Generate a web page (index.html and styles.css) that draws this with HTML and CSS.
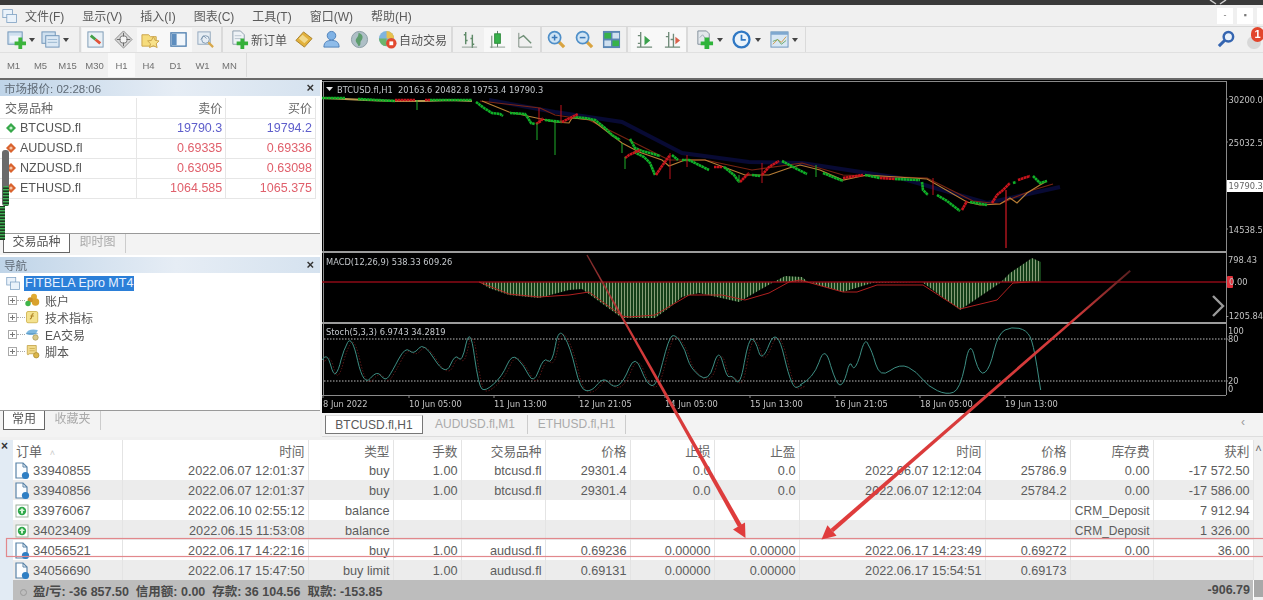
FILE: index.html
```html
<!DOCTYPE html>
<html lang="zh">
<head>
<meta charset="utf-8">
<title>MT4</title>
<link rel="stylesheet" href="styles.css">
</head>
<body>
<svg class="defs" aria-hidden="true">
  <symbol id="i-new" viewBox="0 0 20 20"><rect x="1" y="2" width="15" height="13" fill="#cfe0ef" stroke="#6f94b8"/><rect x="3" y="6" width="11" height="7" fill="#eef4fa"/><path d="M12 8h4v4h4v4h-4v4h-4v-4H8v-4h4z" fill="#3cb43c"/></symbol>
  <symbol id="i-prof" viewBox="0 0 20 20"><rect x="1" y="2" width="14" height="12" fill="#cfe0ef" stroke="#6f94b8"/><rect x="5" y="6" width="14" height="12" fill="#dbe8f4" stroke="#6f94b8"/><path d="M7 10h10M7 13h10" stroke="#9ab6d0"/></symbol>
  <symbol id="i-colors" viewBox="0 0 20 20"><rect x="2" y="2" width="16" height="16" fill="#e8f0f6" stroke="#7d9ab5"/><path d="M5 6l5 4" stroke="#43a047" stroke-width="3"/><path d="M10 10l5 4" stroke="#e0533a" stroke-width="3"/></symbol>
  <symbol id="i-cross" viewBox="0 0 20 20"><path d="M10 1l9 9-9 9-9-9z" fill="#d8d8d8" stroke="#8a8a8a"/><circle cx="10" cy="10" r="4" fill="#f4f4f4" stroke="#777"/><path d="M10 3v4M10 13v4M3 10h4M13 10h4" stroke="#666"/></symbol>
  <symbol id="i-star" viewBox="0 0 20 20"><path d="M1 5h7l2 2h6v10H1z" fill="#f6dc7c" stroke="#c9a24a"/><path d="M13 7l2 4 4 .5-3 3 1 4-4-2-4 2 1-4-3-3 4-.5z" fill="#f8e28a" stroke="#c9a24a"/></symbol>
  <symbol id="i-panel" viewBox="0 0 20 20"><rect x="2" y="3" width="16" height="14" fill="#f1f6fb" stroke="#4f7fb0" stroke-width="1.4"/><rect x="3" y="4" width="5" height="12" fill="#5d8dbe"/></symbol>
  <symbol id="i-docz" viewBox="0 0 20 20"><rect x="2" y="2" width="13" height="13" fill="#e6edf4" stroke="#93a8bd"/><path d="M5 10l3-4 3 3" stroke="#7d97b0" fill="none"/><circle cx="10" cy="10" r="4" fill="none" stroke="#7d97b0"/><path d="M13 13l5 5" stroke="#d8a84a" stroke-width="2.4"/></symbol>
  <symbol id="i-order" viewBox="0 0 20 20"><path d="M3 1h8l4 4v10H3z" fill="#eef2f6" stroke="#8b9cab"/><path d="M5 6h7M5 9h7" stroke="#b8c4cf"/><path d="M11 9h4v3h4v4h-4v4h-4v-4H7v-4h4z" fill="#36b03a"/></symbol>
  <symbol id="i-diam" viewBox="0 0 20 20"><path d="M10 2l9 7-8 9-9-7z" fill="#e2b13c" stroke="#a9812a"/><path d="M9 5l6 5-4 4-6-5z" fill="#f1d98d"/></symbol>
  <symbol id="i-ppl" viewBox="0 0 20 20"><circle cx="10" cy="6" r="4.5" fill="#7fb2e5" stroke="#4d7fb8"/><path d="M2 18c0-6 4-7 8-7s8 1 8 7z" fill="#8fbce9" stroke="#4d7fb8"/></symbol>
  <symbol id="i-globe" viewBox="0 0 20 20"><circle cx="10" cy="10" r="8.5" fill="#aebfc6" stroke="#8a9ca3"/><path d="M9 3c3 1 5 3 4 6s-2 2-2 5-2 3-2 3c-1-3-3-4-3-6s3-3 3-8z" fill="#5c9c6c"/></symbol>
  <symbol id="i-auto" viewBox="0 0 20 20"><circle cx="9" cy="9" r="8" fill="#7fb4de"/><path d="M9 1a8 8 0 0 1 8 8H9z" fill="#e8c04c"/><path d="M1 9a8 8 0 0 0 8 8V9z" fill="#6cb56c"/><circle cx="14" cy="14" r="5.5" fill="#e2492f"/><rect x="12" y="12" width="4" height="4" fill="#fff"/></symbol>
  <symbol id="i-bar" viewBox="0 0 20 20"><path d="M6 2v13M4 5h2M6 11h2M13 5v14M11 9h2M13 15h2" stroke="#5f8a68" stroke-width="1.5" fill="none"/><path d="M2 18h16" stroke="#8a9a90"/></symbol>
  <symbol id="i-candle" viewBox="0 0 20 20"><path d="M10 1v17M4 6v13" stroke="#5c7a63"/><rect x="7" y="4" width="6" height="10" fill="#37b14a" stroke="#2d8a3b"/><path d="M2 18h16" stroke="#8a9a90"/></symbol>
  <symbol id="i-line" viewBox="0 0 20 20"><path d="M4 3v15h14" stroke="#7c8a80" fill="none"/><path d="M4 9l5-3 8 8" stroke="#6f8f76" stroke-width="1.4" fill="none"/></symbol>
  <symbol id="i-zin" viewBox="0 0 20 20"><path d="M12 12l6 6" stroke="#d9a441" stroke-width="3.4"/><circle cx="8" cy="8" r="6.4" fill="#cfe4f5" stroke="#4f8fc8" stroke-width="1.8"/><path d="M5 8h6M8 5v6" stroke="#3a78b8" stroke-width="1.6"/></symbol>
  <symbol id="i-zout" viewBox="0 0 20 20"><path d="M12 12l6 6" stroke="#d9a441" stroke-width="3.4"/><circle cx="8" cy="8" r="6.4" fill="#cfe4f5" stroke="#4f8fc8" stroke-width="1.8"/><path d="M5 8h6" stroke="#3a78b8" stroke-width="1.6"/></symbol>
  <symbol id="i-tile" viewBox="0 0 20 20"><rect x="1" y="1" width="18" height="18" fill="#5a86b4"/><rect x="2.5" y="3" width="7" height="6" fill="#37b24a"/><rect x="11" y="3" width="7" height="6" fill="#cfe0ef"/><rect x="2.5" y="11" width="7" height="6" fill="#cfe0ef"/><rect x="11" y="11" width="7" height="6" fill="#37b24a"/></symbol>
  <symbol id="i-shift" viewBox="0 0 20 20"><path d="M6 2v16M3 6h3M3 14h3M2 18h16" stroke="#6f8a78" stroke-width="1.4" fill="none"/><path d="M10 6l6 5-6 5z" fill="#3aa14c"/></symbol>
  <symbol id="i-scroll" viewBox="0 0 20 20"><path d="M6 2v16M11 4v14M3 7h3M8 10h3M2 18h16" stroke="#6f8a78" stroke-width="1.4" fill="none"/><path d="M13 7l5 4-5 4z" fill="#d9604a"/></symbol>
  <symbol id="i-ind" viewBox="0 0 20 20"><path d="M3 1h9l3 3v11H3z" fill="#e3e8ec" stroke="#7f8e9a"/><path d="M5 8l3-3 3 4" stroke="#9aa8b2" fill="none"/><path d="M10 8h5v4h4v4h-4v4h-5v-4H6v-4h4z" fill="#2fb43a"/></symbol>
  <symbol id="i-clock" viewBox="0 0 20 20"><circle cx="10" cy="10" r="8.4" fill="#eaf3fb" stroke="#2f78c4" stroke-width="2.4"/><path d="M10 5v5.5h4.5" stroke="#2f78c4" stroke-width="1.8" fill="none"/></symbol>
  <symbol id="i-tpl" viewBox="0 0 20 20"><rect x="1" y="2" width="18" height="16" fill="#d8e7f4" stroke="#6a93ba"/><rect x="1" y="2" width="18" height="3" fill="#7fa8cf"/><path d="M3 15l5-5 4 3 5-6" stroke="#d49b47" fill="none"/><path d="M3 12l5-2 4 5 5-4" stroke="#69a968" fill="none"/></symbol>
  <symbol id="i-search" viewBox="0 0 20 20"><circle cx="12" cy="7" r="5" fill="#eaf2fb" stroke="#3565b0" stroke-width="2.6"/><path d="M8 11l-6 6" stroke="#3565b0" stroke-width="3.2"/></symbol>
  <symbol id="i-plus" viewBox="0 0 9 9"><rect x=".5" y=".5" width="8" height="8" fill="#fff" stroke="#a9a9a9"/><path d="M2 4.5h5M4.5 2v5" stroke="#777"/></symbol>
  <symbol id="i-root" viewBox="0 0 20 20"><rect x="1" y="2" width="12" height="10" fill="#eaf2fa" stroke="#7da0c2"/><rect x="6" y="8" width="12" height="10" fill="#eaf2fa" stroke="#7da0c2"/></symbol>
  <symbol id="i-acct" viewBox="0 0 20 20"><circle cx="12" cy="5" r="4" fill="#e0ab32"/><circle cx="14" cy="12" r="5" fill="#d9a22c"/><circle cx="7" cy="9" r="3.5" fill="#c88f2a"/><circle cx="4" cy="14" r="3.6" fill="#3fb54a"/></symbol>
  <symbol id="i-func" viewBox="0 0 20 20"><rect x="2" y="2" width="15" height="15" rx="2" fill="#f4e28f" stroke="#c9a93d"/><path d="M11.5 5c-2-.5-2 1-2.4 3s-.6 4-2.6 4" stroke="#a87a1c" stroke-width="1.4" fill="none"/><path d="M7 8h5" stroke="#a87a1c"/></symbol>
  <symbol id="i-ea" viewBox="0 0 20 20"><path d="M1 9c2-5 8-7 16-5-1 6-8 9-16 5z" fill="#7db8e0"/><path d="M2 9h15" stroke="#4f8db8"/><circle cx="14" cy="14" r="3.6" fill="#d8c98a" stroke="#a79a55"/></symbol>
  <symbol id="i-script" viewBox="0 0 20 20"><path d="M3 2h12v11H5c0 2-2 2-2 0z" fill="#f0d98a" stroke="#bd9c3d"/><path d="M6 6h7M6 9h7" stroke="#c9a94a"/><circle cx="15" cy="15" r="3.6" fill="#dcb64a" stroke="#a88a2c"/></symbol>
  <symbol id="i-doc" viewBox="0 0 16 18"><path d="M2 1h7l4 4v11H2z" fill="#fbfdff" stroke="#5a84a8" stroke-width="1.2"/><path d="M9 1v4h4" fill="none" stroke="#5a84a8"/><circle cx="11.5" cy="13.5" r="3.6" fill="#2f7fc4"/></symbol>
  <symbol id="i-bal" viewBox="0 0 16 18"><rect x="2" y="3" width="12" height="12" fill="#fff" stroke="#9fb39f"/><circle cx="8" cy="9" r="4.2" fill="#2fa84a"/><path d="M8 6l3 3H9v2.5H7V9H5z" fill="#d8f5d8"/></symbol>
  <symbol id="i-up" viewBox="0 0 12 12"><path d="M6 1l5 5-5 5-5-5z" fill="#37a84a"/><circle cx="6" cy="6" r="1.6" fill="#c9f0cf"/></symbol>
  <symbol id="i-dn" viewBox="0 0 12 12"><path d="M6 1l5 5-5 5-5-5z" fill="#d9632f"/><circle cx="6" cy="6" r="1.6" fill="#f5c6a8"/></symbol>
</svg>

<div class="page">
  <div class="titlestrip"></div>

  <div class="menubar">
    <svg class="appicon"><use href="#i-root"/></svg>
    <span class="menu">文件(F)</span><span class="menu">显示(V)</span><span class="menu">插入(I)</span><span class="menu">图表(C)</span><span class="menu">工具(T)</span><span class="menu">窗口(W)</span><span class="menu">帮助(H)</span>
    <div class="winbtns"><span class="winbtn">-</span><span class="winbtn">▪</span><span class="winbtn cut"></span></div>
  </div>

  <div class="toolbar">
    <div class="tbgroup g-a">
      <span class="tb w26"><svg class="ic"><use href="#i-new"/></svg></span><span class="caret"></span>
      <span class="tb w26 m2"><svg class="ic"><use href="#i-prof"/></svg></span><span class="caret"></span>
    </div>
    <div class="tbgroup g-b">
      <span class="tb on"><svg class="ic"><use href="#i-colors"/></svg></span>
      <span class="tb"><svg class="ic"><use href="#i-cross"/></svg></span>
      <span class="tb on"><svg class="ic"><use href="#i-star"/></svg></span>
      <span class="tb on"><svg class="ic"><use href="#i-panel"/></svg></span>
      <span class="tb"><svg class="ic"><use href="#i-docz"/></svg></span>
    </div>
    <div class="tbgroup g-c">
      <span class="tb w26"><svg class="ic"><use href="#i-order"/></svg></span><span class="tbtext">新订单</span>
      <span class="tb w28 m1"><svg class="ic"><use href="#i-diam"/></svg></span>
      <span class="tb w28"><svg class="ic"><use href="#i-ppl"/></svg></span>
      <span class="tb w30"><svg class="ic"><use href="#i-globe"/></svg></span>
      <span class="tb w26"><svg class="ic"><use href="#i-auto"/></svg></span><span class="tbtext">自动交易</span>
    </div>
    <div class="tbgroup g-d">
      <span class="tb"><svg class="ic"><use href="#i-bar"/></svg></span>
      <span class="tb on"><svg class="ic"><use href="#i-candle"/></svg></span>
      <span class="tb"><svg class="ic"><use href="#i-line"/></svg></span>
    </div>
    <div class="tbgroup g-e">
      <span class="tb"><svg class="ic"><use href="#i-zin"/></svg></span>
      <span class="tb"><svg class="ic"><use href="#i-zout"/></svg></span>
      <span class="tb"><svg class="ic"><use href="#i-tile"/></svg></span>
    </div>
    <div class="tbgroup g-f">
      <span class="tb on"><svg class="ic"><use href="#i-shift"/></svg></span>
      <span class="tb on"><svg class="ic"><use href="#i-scroll"/></svg></span>
    </div>
    <div class="tbgroup g-g">
      <span class="tb w26"><svg class="ic"><use href="#i-ind"/></svg></span><span class="caret"></span>
      <span class="tb w26 m5"><svg class="ic"><use href="#i-clock"/></svg></span><span class="caret"></span>
      <span class="tb w26 m5"><svg class="ic"><use href="#i-tpl"/></svg></span><span class="caret"></span>
    </div>
    <div class="tbright">
      <svg class="ic"><use href="#i-search"/></svg>
      <span class="bubble"><span class="badge">1</span></span>
    </div>
  </div>

  <div class="tfbar">
    <span class="tf">M1</span><span class="tf">M5</span><span class="tf">M15</span><span class="tf">M30</span><span class="tf on">H1</span><span class="tf">H4</span><span class="tf">D1</span><span class="tf">W1</span><span class="tf">MN</span><span class="tfend"></span>
  </div>

  <div class="main">
    <div class="left">
      <section class="panel market">
        <header class="ptitle"><span>市场报价: 02:28:06</span><b class="pclose">×</b></header>
        <table class="mw">
          <tr class="mwh"><td>交易品种</td><td class="r">卖价</td><td class="r">买价</td></tr>
          <tr><td><svg class="dir"><use href="#i-up"/></svg>BTCUSD.fl</td><td class="r blue">19790.3</td><td class="r blue">19794.2</td></tr>
          <tr><td><svg class="dir"><use href="#i-dn"/></svg>AUDUSD.fl</td><td class="r red">0.69335</td><td class="r red">0.69336</td></tr>
          <tr><td><svg class="dir"><use href="#i-dn"/></svg>NZDUSD.fl</td><td class="r red">0.63095</td><td class="r red">0.63098</td></tr>
          <tr><td><svg class="dir"><use href="#i-dn"/></svg>ETHUSD.fl</td><td class="r red">1064.585</td><td class="r red">1065.375</td></tr>
        </table>
        <div class="grow"></div>
        <div class="ptabs"><span class="ptab on">交易品种</span><span class="ptab">即时图</span></div>
      </section>
      <section class="panel nav">
        <header class="ptitle"><span>导航</span><b class="pclose">×</b></header>
        <div class="tree">
          <div class="troot"><svg class="ti"><use href="#i-root"/></svg><span class="sel">FITBELA Epro MT4</span></div>
          <div class="tnode"><svg class="tplus"><use href="#i-plus"/></svg><i class="tdash"></i><svg class="ti"><use href="#i-acct"/></svg>账户</div>
          <div class="tnode"><svg class="tplus"><use href="#i-plus"/></svg><i class="tdash"></i><svg class="ti"><use href="#i-func"/></svg>技术指标</div>
          <div class="tnode"><svg class="tplus"><use href="#i-plus"/></svg><i class="tdash"></i><svg class="ti"><use href="#i-ea"/></svg>EA交易</div>
          <div class="tnode"><svg class="tplus"><use href="#i-plus"/></svg><i class="tdash"></i><svg class="ti"><use href="#i-script"/></svg>脚本</div>
        </div>
        <div class="grow"></div>
        <div class="ptabs short"><span class="ptab on">常用</span><span class="ptab">收藏夹</span></div>
      </section>
    </div>

    <div class="chartcol">
      <svg class="chart" viewBox="322 80 941 333" xmlns="http://www.w3.org/2000/svg">
        <defs>
          <pattern id="hist" width="3" height="8" patternUnits="userSpaceOnUse">
            <rect width="3" height="8" fill="#143f18"/><rect width="1" height="8" fill="#869e78"/>
          </pattern>
        </defs>
        <g class="frame">
          <path d="M322 81.5H1226M323.5 81V395M1226.5 81V395"/>
          <path class="thick" d="M322 252H1226M322 323H1226"/>
          <path d="M322 395.5H1226"/>
          <path d="M1226 99h2M1226 142h2M1226 229h2M1226 339h2M1226 381h2"/>
          <path d="M323 396v2M409 396v2M494 396v2M579 396v2M665 396v2M750 396v2M835 396v2M920 396v2M1005 396v2"/>
        </g>
        <text class="ct" x="337" y="93">BTCUSD.fl,H1  20163.6 20482.8 19753.4 19790.3</text>
        <path d="M326 87h7l-3.500 4z" fill="#e8e8e8"/>

        <!-- moving averages -->
        <g fill="none">
          <polyline stroke="#080a34" stroke-width="4" points="489,100 555,112 622,122 682,153 749,162 802,163 900,178 987,203 1060,187"/>
          <polyline stroke="#7a2412" stroke-width="1.200" points="480,101 540,108 555,115 589,120 635,143 669,160 705,160 752,170 802,163 843,175 927,178 973,201 1000,204 1013,198 1033,190 1053,184"/>
          <polyline stroke="#b87e36" stroke-width="1.200" points="482,101 509,112 555,122 569,123 572,118 592,120 622,143 639,152 662,160 669,166 685,160 705,160 745,175 769,175 789,168 800,165 820,170 843,180 867,175 927,179 967,202 980,205 1000,204 1010,198 1017,203 1027,193 1040,185 1047,181"/>
        </g>
        <!-- flat opening of the price -->
        <polyline fill="none" stroke="#b89a50" stroke-width="2" points="322,98 345,99 365,100 395,101 425,101 450,100 472,101"/>
        <g class="gc">
          <polyline points="322,98 345,98"/><polyline points="358,99 395,101"/><polyline points="430,100 472,100"/>
          <polyline points="476,102 484,108 492,113 500,114 503,116"/>
          <polyline points="510,113 525,114 528,118 531,123 535,124"/>
          <polyline points="545,120 562,122"/>
          <polyline points="573,117 585,118 595,120 605,128 612,135 620,140"/>
          <polyline points="630,139 635,148 642,151 650,153 660,156"/>
          <polyline points="634,152 644,157 650,163 655,175"/>
          <polyline points="672,155 678,160"/>
          <polyline points="682,160 689,160 699,165 709,170"/>
          <polyline points="724,167 734,175 739,182"/>
          <polyline points="752,175 760,176"/>
          <polyline points="782,161 795,168 807,174"/>
          <polyline points="823,173 833,177 843,181"/>
          <polyline points="865,175 880,178"/><polyline points="895,179 920,180"/>
          <polyline points="922,182 923,190 928,195"/>
          <polyline points="937,195 947,201 960,211"/>
          <polyline points="970,202 987,205"/>
          <polyline points="1013,183 1016,182"/>
          <polyline points="1033,176 1040,183 1047,181"/>
        </g>
        <g class="rc">
          <polyline points="395,100 415,100"/><polyline points="425,100 430,100"/>
          <polyline points="536,124 541,121 543,118"/>
          <polyline points="562,122 570,118 578,114"/>
          <polyline points="625,158 629,155 640,150"/>
          <polyline points="656,175 662,166 670,155"/>
          <polyline points="714,167 722,167"/>
          <polyline points="740,182 749,173"/>
          <polyline points="762,175 769,167 779,161"/>
          <polyline points="843,178 863,175"/>
          <polyline points="880,178 895,179"/>
          <polyline points="962,210 967,201"/>
          <polyline points="992,203 997,195 1003,190 1010,183"/>
          <polyline points="1018,180 1030,176"/>
        </g>
        <path stroke="#1fae2a" stroke-width="1" fill="none" d="M417 100v10M537 123v17M555 120v35M625 157v12M622 143v10M816 165v12M739 175v8"/>
        <path stroke="#c0121c" stroke-width="1" fill="none" d="M561 105v18M539 108v15M670 153v26M687 155v12M762 163v20M933 178v17"/>
        <path stroke="#a8141c" stroke-width="1.500" fill="none" d="M1006 190v58"/>

        <!-- MACD -->
        <polygon fill="url(#hist)" points="479,282 489,288 509,295 539,298 569,290 582,289 622,318 655,318 669,308 682,297 699,293 739,302 772,283 785,276 802,277 808,282 843,292 872,283 922,282 960,310 1000,283 1010,273 1032,258 1041,262 1041,282 1000,282 800,282"/>
        <path stroke="#8c0a16" stroke-width="1.500" fill="none" d="M322 282H1226"/>
        <polyline fill="none" stroke="#b02020" stroke-width="1" points="479,282 509,294 539,297 569,295 589,292 622,316 629,317 655,315 689,295 722,295 745,300 769,293 789,282 800,280 843,292 857,292 877,285 923,285 960,309 997,300 1013,283 1030,282"/>
        <text class="ct" x="326" y="265">MACD(12,26,9) 538.33 609.26</text>

        <!-- Stochastic -->
        <path class="lvl" d="M324 339H1226M324 381H1226"/>
        <g transform="translate(322 250) scale(.33333)" fill="none">
          <path class="sig" transform="translate(8 4)" d="M0,330 Q15,305 25,342 Q35,380 42,370 Q50,360 57,330 Q65,300 77,277 Q90,255 107,332 Q125,410 145,385 Q165,360 177,377 Q190,395 200,380 Q210,365 230,327 Q250,290 262,302 Q275,315 290,295 Q305,275 337,327 Q370,380 385,345 Q400,310 410,325 Q420,340 432,282 Q445,225 457,317 Q470,410 480,417 Q490,425 515,402 Q540,380 555,345 Q570,310 587,327 Q605,345 620,375 Q635,405 650,362 Q665,320 677,332 Q690,345 700,287 Q710,230 727,260 Q745,290 760,355 Q775,420 792,422 Q810,425 827,402 Q845,380 860,397 Q875,415 890,405 Q905,395 922,353 Q940,312 957,358 Q975,405 990,407 Q1005,410 1022,337 Q1040,265 1050,258 Q1060,252 1075,276 Q1090,300 1097,327 Q1105,355 1132,377 Q1160,400 1175,345 Q1190,290 1202,337 Q1215,385 1222,380 Q1230,375 1242,392 Q1255,410 1267,337 Q1280,265 1290,267 Q1300,270 1310,305 Q1320,340 1342,282 Q1365,225 1387,322 Q1410,420 1425,412 Q1440,405 1440,405"/>
          <path class="sto" d="M0,330 Q15,305 25,342 Q35,380 42,370 Q50,360 57,330 Q65,300 77,277 Q90,255 107,332 Q125,410 145,385 Q165,360 177,377 Q190,395 200,380 Q210,365 230,327 Q250,290 262,302 Q275,315 290,295 Q305,275 337,327 Q370,380 385,345 Q400,310 410,325 Q420,340 432,282 Q445,225 457,317 Q470,410 480,417 Q490,425 515,402 Q540,380 555,345 Q570,310 587,327 Q605,345 620,375 Q635,405 650,362 Q665,320 677,332 Q690,345 700,287 Q710,230 727,260 Q745,290 760,355 Q775,420 792,422 Q810,425 827,402 Q845,380 860,397 Q875,415 890,405 Q905,395 922,353 Q940,312 957,358 Q975,405 990,407 Q1005,410 1022,337 Q1040,265 1050,258 Q1060,252 1075,276 Q1090,300 1097,327 Q1105,355 1132,377 Q1160,400 1175,345 Q1190,290 1202,337 Q1215,385 1222,380 Q1230,375 1242,392 Q1255,410 1267,337 Q1280,265 1290,267 Q1300,270 1310,305 Q1320,340 1342,282 Q1365,225 1387,322 Q1410,420 1425,412 Q1440,405 1440,405"/>
        </g>
        <g transform="translate(800 250) scale(.33333)" fill="none">
          <path class="sto" d="M0,405 Q40,385 57,337 Q75,280 92,347 Q110,405 120,405 Q130,405 140,370 Q150,325 157,350 Q165,365 180,317 Q195,255 205,285 Q215,300 227,342 Q240,385 270,362 Q300,340 325,352 Q350,365 367,387 Q385,410 412,422 Q440,435 460,427 Q480,420 495,347 Q510,255 525,327 Q540,380 555,367 Q570,355 582,302 Q595,250 615,240 Q635,230 657,235 Q680,240 690,260 Q700,280 711,350 L722,420"/>
        </g>
        <text class="ct" x="326" y="335">Stoch(5,3,3) 6.9743 34.2819</text>

        <!-- axis -->
        <g class="ax">
          <text x="1228.600" y="102.500">30200.0</text><text x="1228.600" y="145.500">25032.5</text>
          <text x="1228.600" y="232.500">14538.5</text>
          <text x="1228" y="263">798.43</text>
          <text x="1225.800" y="319">-1205.84</text>
          <text x="1228" y="334">100</text><text x="1228" y="342">80</text><text x="1228" y="384">20</text><text x="1228" y="392">0</text>
        </g>
        <rect x="1227" y="180" width="36" height="12" fill="#fff"/>
        <text class="ax dark" x="1228.600" y="189">19790.3</text>
        <rect x="1227" y="276" width="6" height="12" rx="1" fill="#e0303a"/>
        <text class="ax" x="1229" y="285">0.00</text>
        <path d="M1213 296l10 10-10 10" fill="none" stroke="#9a9a9a" stroke-width="2.400"/>

        <g class="tl">
          <text x="323" y="407">8 Jun 2022</text><text x="409" y="407">10 Jun 05:00</text><text x="494" y="407">11 Jun 13:00</text><text x="579" y="407">12 Jun 21:05</text><text x="665" y="407">14 Jun 05:00</text><text x="750" y="407">15 Jun 13:00</text><text x="835" y="407">16 Jun 21:05</text><text x="920" y="407">18 Jun 05:00</text><text x="1005" y="407">19 Jun 13:00</text>
        </g>
      </svg>
      <div class="ctabs">
        <span class="ctab on">BTCUSD.fl,H1</span><span class="ctab">AUDUSD.fl,M1</span><span class="ctab third">ETHUSD.fl,H1</span>
        <span class="cnav">‹</span>
      </div>
    </div>
  </div>

  <div class="terminal">
    <div class="rail"><b>×</b></div>
    <table class="orders">
      <colgroup><col class="c1"><col class="c2"><col class="c3"><col class="c4"><col class="c5"><col class="c6"><col class="c7"><col class="c8"><col class="c9"><col class="c10"><col class="c11"><col class="c12"></colgroup>
      <tr class="oh"><td class="l">订单 <span class="sort">˄</span></td><td>时间</td><td>类型</td><td>手数</td><td>交易品种</td><td>价格</td><td>止损</td><td>止盈</td><td>时间</td><td>价格</td><td>库存费</td><td>获利</td></tr>
      <tr><td class="l"><svg class="ri"><use href="#i-doc"/></svg>33940855</td><td>2022.06.07 12:01:37</td><td>buy</td><td>1.00</td><td>btcusd.fl</td><td>29301.4</td><td>0.0</td><td>0.0</td><td>2022.06.07 12:12:04</td><td>25786.9</td><td>0.00</td><td>-17 572.50</td></tr>
      <tr><td class="l"><svg class="ri"><use href="#i-doc"/></svg>33940856</td><td>2022.06.07 12:01:37</td><td>buy</td><td>1.00</td><td>btcusd.fl</td><td>29301.4</td><td>0.0</td><td>0.0</td><td>2022.06.07 12:12:04</td><td>25784.2</td><td>0.00</td><td>-17 586.00</td></tr>
      <tr><td class="l"><svg class="ri"><use href="#i-bal"/></svg>33976067</td><td>2022.06.10 02:55:12</td><td>balance</td><td></td><td></td><td></td><td></td><td></td><td></td><td></td><td class="crm">CRM_Deposit</td><td>7 912.94</td></tr>
      <tr><td class="l"><svg class="ri"><use href="#i-bal"/></svg>34023409</td><td>2022.06.15 11:53:08</td><td>balance</td><td></td><td></td><td></td><td></td><td></td><td></td><td></td><td class="crm">CRM_Deposit</td><td>1 326.00</td></tr>
      <tr><td class="l"><svg class="ri"><use href="#i-doc"/></svg>34056521</td><td>2022.06.17 14:22:16</td><td>buy</td><td>1.00</td><td>audusd.fl</td><td>0.69236</td><td>0.00000</td><td>0.00000</td><td>2022.06.17 14:23:49</td><td>0.69272</td><td>0.00</td><td>36.00</td></tr>
      <tr><td class="l"><svg class="ri"><use href="#i-doc"/></svg>34056690</td><td>2022.06.17 15:47:50</td><td>buy limit</td><td>1.00</td><td>audusd.fl</td><td>0.69131</td><td>0.00000</td><td>0.00000</td><td>2022.06.17 15:54:51</td><td>0.69173</td><td></td><td></td></tr>
      <tr class="tot"><td class="l" colspan="11"><i class="dot"></i>盈/亏: -36 857.50&nbsp; 信用额: 0.00&nbsp; 存款: 36 104.56&nbsp; 取款: -153.85</td><td>-906.79</td></tr>
    </table>
    <div class="vscroll"><span class="sup">˄</span><span class="thumb"></span></div>
  </div>

  <svg class="overlay" viewBox="0 0 1263 600" xmlns="http://www.w3.org/2000/svg">
    <defs>
      <linearGradient id="a1" gradientUnits="userSpaceOnUse" x1="587" y1="255" x2="745" y2="537"><stop offset="0" stop-color="#7a2a2a"/><stop offset=".3" stop-color="#d23a3a"/><stop offset="1" stop-color="#e03c3c"/></linearGradient>
      <linearGradient id="a2" gradientUnits="userSpaceOnUse" x1="1130" y1="271" x2="822" y2="539"><stop offset="0" stop-color="#5a2020"/><stop offset=".18" stop-color="#d23a3a"/><stop offset="1" stop-color="#e03c3c"/></linearGradient>
      <pattern id="stripes" width="7" height="3" patternUnits="userSpaceOnUse"><rect width="7" height="3" fill="#1e3a20"/><rect width="7" height="1.400" fill="#3fae55"/></pattern>
    </defs>
    <path d="M1210 0l6 4M1226 0l-6 4" stroke="#cfcfcf" stroke-width="1.500" fill="none"/>
    <rect x="2" y="150" width="7" height="56" rx="3" fill="#6a6a6a"/>
    <rect x="3" y="186" width="6" height="20" rx="2" fill="url(#stripes)"/>
    <rect x="0" y="206" width="5" height="34" fill="url(#stripes)"/>
    <rect class="hl" x="6.500" y="538.500" width="1260" height="18"/>
    <polygon fill="url(#a1)" points="586.400,255.300 587.600,254.700 742,525 738,527"/>
    <polygon fill="#e03c3c" points="745.500,538 733,529.400 745,522.600"/>
    <polygon fill="url(#a2)" points="1129.600,270 1130.800,271.500 833.500,532 830.500,529"/>
    <polygon fill="#e03c3c" points="821.500,539.500 827.400,525.200 836.600,535.800"/>
  </svg>
</div>
</body>
</html>
```
FILE: styles.css
```css
* { box-sizing: border-box; }
html, body { margin: 0; padding: 0; height: 600px; overflow: hidden; background: #f0f0f0; }
body { font-family: "Liberation Sans", "Noto Sans CJK SC", sans-serif; color: #555; }
.defs { position: absolute; width: 0; height: 0; }
.page { position: relative; width: 1263px; height: 600px; overflow: hidden; display: flex; flex-direction: column; filter: blur(.45px); }

.titlestrip { height: 5px; background: #3a3a3a; flex: none; }

.menubar { height: 22px; flex: none; display: flex; align-items: center; background: #f0f0f0; border-bottom: 1px solid #d8d8d8; font-size: 12px; color: #5a5a5a; }
.appicon { width: 16px; height: 16px; margin: 0 6px 0 2px; }
.menu { margin-left: 1px; margin-right: 17px; white-space: nowrap; }
.winbtns { margin-left: auto; display: flex; gap: 4px; }
.winbtn { width: 16px; height: 16px; background: #fff; font-size: 9px; line-height: 15px; text-align: center; color: #777; }
.winbtn.cut { width: 6px; }

.toolbar { height: 26px; flex: none; display: flex; align-items: center; background: #f0f0f0; border-bottom: 1px solid #e0e0e0; position: relative; }
.tbgroup { display: flex; align-items: center; height: 25px; border-right: 2px solid #dadada; flex: none; }
.g-a { width: 81px; padding-left: 3px; }
.g-b { width: 142px; padding-left: 1px; }
.g-c { width: 230px; padding-left: 3px; }
.g-d { width: 89px; padding-left: 3px; }
.g-e { width: 86px; padding-left: 1px; }
.g-f { width: 60px; padding-left: 3px; }
.g-g { width: 118px; padding-left: 3px; border-right: 1px solid #dadada; }
.tb { width: 27.500px; height: 24px; display: flex; align-items: center; justify-content: center; flex: none; }
.tb.on { background: #f8f8f8; }
.w26 { width: 26px; }
.w28 { width: 28px; }
.w30 { width: 29px; }
.m1 { margin-left: 1px; }
.m2 { margin-left: 2px; }
.m5 { margin-left: 5.500px; }
.ic { width: 19px; height: 19px; display: block; }
.caret { width: 0; height: 0; border-left: 3px solid transparent; border-right: 3px solid transparent; border-top: 4px solid #444; flex: none; }
.tbtext { font-size: 12px; color: #555; white-space: nowrap; margin-left: -1px; margin-right: 1px; }
.tbright { margin-left: auto; display: flex; align-items: center; }
.bubble { width: 14px; height: 13px; margin: 5px 2px 0 11px; background: #d8d8d8; border-radius: 7px; position: relative; display: block; }
.badge { position: absolute; left: 4px; top: -9px; width: 13px; height: 15px; border-radius: 7px; background: #e2452c; color: #fff; font-size: 11px; line-height: 15px; text-align: center; font-weight: bold; }

.tfbar { height: 27px; flex: none; display: flex; background: #f0f0f0; border-bottom: 2px solid #6a6a6a; font-size: 9.500px; color: #707070; align-items: stretch; padding-bottom: 1px; }
.tf { width: 27px; display: flex; align-items: center; justify-content: center; }
.tf.on { background: #f9f9f9; }
.tfend { width: 1px; background: #dcdcdc; margin-left: 3px; }

.main { height: 357px; flex: none; display: flex; background: #f0f0f0; }
.left { width: 320px; flex: none; display: flex; flex-direction: column; background: #fff; }
.panel { display: flex; flex-direction: column; background: #fff; }
.market { height: 175px; }
.nav { height: 180px; margin-top: 2px; }
.ptitle { height: 16px; flex: none; display: flex; justify-content: space-between; align-items: center; padding: 0 6px 0 4px; background: linear-gradient(90deg, #bfd4e8, #e6edf5 55%, #d5e2ef); font-size: 11.500px; color: #5f6a75; }
.pclose { font-size: 13px; color: #333; line-height: 14px; }
.grow { flex: 1; }
.mw { border-collapse: collapse; table-layout: fixed; width: 316px; margin-top: 2px; font-size: 12.500px; color: #555; }
.mw td { height: 20px; padding: 0 3px; border-right: 1px solid #e6e6e6; border-bottom: 1px solid #e6e6e6; white-space: nowrap; }
.mw td:first-child { width: 136px; padding-left: 5px; }
.mw td.r { text-align: right; }
.mwh td { font-size: 12px; color: #666; }
.blue { color: #5e5ecb; }
.red { color: #e0606c; }
.dir { width: 12px; height: 12px; vertical-align: -2px; margin-right: 3px; }

.ptabs { height: 22px; flex: none; display: flex; padding-left: 3px; border-top: 1px solid #999; background: #f3f3f3; font-size: 12px; color: #aaa; }
.ptabs.short { height: 27px; }
.ptab { width: 56px; height: 19px; line-height: 17px; text-align: center; border-right: 1px solid #ccc; }
.ptab.on { width: 67px; background: #fff; color: #555; border: 1px solid #666; border-top: 0; }
.short .ptab { width: 56px; }
.short .ptab.on { width: 42px; }

.tree { padding: 2px 0 0 6px; font-size: 12px; color: #555; }
.troot { height: 17px; display: flex; align-items: center; }
.tnode { height: 17px; display: flex; align-items: center; }
.ti { width: 15px; height: 15px; margin-right: 5px; flex: none; }
.troot .ti { margin-right: 3px; margin-left: 0; }
.sel { background: #2b7fd8; color: #e8f2ff; padding: 0 1px; line-height: 15px; font-size: 12.500px; }
.tplus { width: 9px; height: 9px; margin-left: 2px; flex: none; }
.tdash { width: 8px; border-top: 1px dotted #aaa; flex: none; }

.chartcol { width: 941px; margin-left: 2px; flex: none; display: flex; flex-direction: column; }
.chart { display: block; width: 941px; height: 333px; background: #000; flex: none; }
.frame { fill: none; stroke: #8a8a8a; stroke-width: 1; }
.frame .thick { stroke: #9c9c9c; stroke-width: 2; }
.ct { font-family: "DejaVu Sans", sans-serif; font-size: 8.300px; fill: #c4c8cc; white-space: pre; }
.gc polyline { fill: none; stroke: #10b028; stroke-width: 2.600; stroke-dasharray: 2.600 .4; }
.rc polyline { fill: none; stroke: #c8141c; stroke-width: 2.600; stroke-dasharray: 2.600 .4; }
.lvl { fill: none; stroke: #bcbcbc; stroke-width: 1; stroke-dasharray: 1.500 1.500; }
.sto { stroke: #3d8f84; stroke-width: 3; }
.sig { stroke: #6a1a1a; stroke-width: 3; stroke-dasharray: 4 5; }
.ax { font-family: "DejaVu Sans", sans-serif; font-size: 8.300px; fill: #c2c2c2; }
.ax text { fill: #c2c2c2; }
.ax.dark { fill: #666; }
.tl text { font-family: "DejaVu Sans", sans-serif; font-size: 8.300px; fill: #c2c2c2; }

.ctabs { height: 24px; flex: none; display: flex; padding: 2px 0 0 3px; background: #f3f3f3; border-bottom: 1px solid #ddd; font-size: 12px; color: #aaa; }
.ctab { width: 105px; height: 19px; line-height: 18px; text-align: center; border-right: 1px solid #ccc; }
.ctab.third { width: 98px; }
.ctab.on { width: 98px; background: #fff; color: #5a5a5a; border: 1px solid #777; border-top-color: #ddd; }
.cnav { margin-left: auto; padding-right: 18px; color: #999; font-size: 12px; }

.terminal { height: 163px; flex: none; display: flex; padding-top: 3px; background: #f0f0f0; font-size: 12.700px; color: #5c5c5c; }
.rail { width: 13px; flex: none; background: #e2ebf4; }
.rail b { display: block; font-size: 12px; line-height: 12px; padding-left: 1px; color: #333; }
.orders { width: 1240px; flex: none; border-collapse: collapse; table-layout: fixed; background: #fff; align-self: flex-start; }
.c1 { width: 109px; } .c2 { width: 186px; } .c3 { width: 85px; } .c4 { width: 68px; }
.c5 { width: 84px; } .c6 { width: 85px; } .c7 { width: 84px; } .c8 { width: 85px; }
.c9 { width: 186px; } .c10 { width: 85px; } .c11 { width: 83px; } .c12 { width: 100px; }
.orders td { height: 20px; padding: 2px 3px 0; text-align: right; white-space: nowrap; border-right: 1px solid #e4e4e4; overflow: hidden; }
.orders td.l { text-align: left; padding-left: 1px; font-size: 13px; }
.orders td.crm { font-size: 12px; }
.orders tr:nth-child(odd) { background: #ececec; }
.orders tr.oh { background: #fff; }
.orders tr.oh td { color: #666; padding-top: 0; }
.orders tr.oh td.l { padding-left: 3px; }
.sort { color: #ccc; font-size: 9px; margin-left: 4px; }
.ri { width: 16px; height: 18px; vertical-align: -5px; margin-right: 3px; }
.orders tr.tot { background: #bdbdbd; }
.tot td { font-weight: bold; border-right: 0; color: #4a4a4a; }
.orders .tot td, .orders .tot td.l { font-size: 12.500px; padding-top: 0; }
.orders .tot td.l { padding-left: 7px; }
.dot { display: inline-block; width: 7px; height: 7px; border-radius: 50%; border: 1px solid #999; margin-right: 6px; }
.vscroll { width: 10px; flex: none; display: flex; flex-direction: column; justify-content: space-between; color: #666; font-size: 11px; line-height: 12px; text-align: center; height: 157px; }
.sup { display: block; height: 12px; margin-top: 2px; }
.thumb { display: block; height: 17px; background: #a8a8a8; }

.overlay { position: absolute; left: 0; top: 0; width: 1263px; height: 600px; pointer-events: none; }
.hl { fill: none; stroke: #e2888c; stroke-width: 1.200; }
```
